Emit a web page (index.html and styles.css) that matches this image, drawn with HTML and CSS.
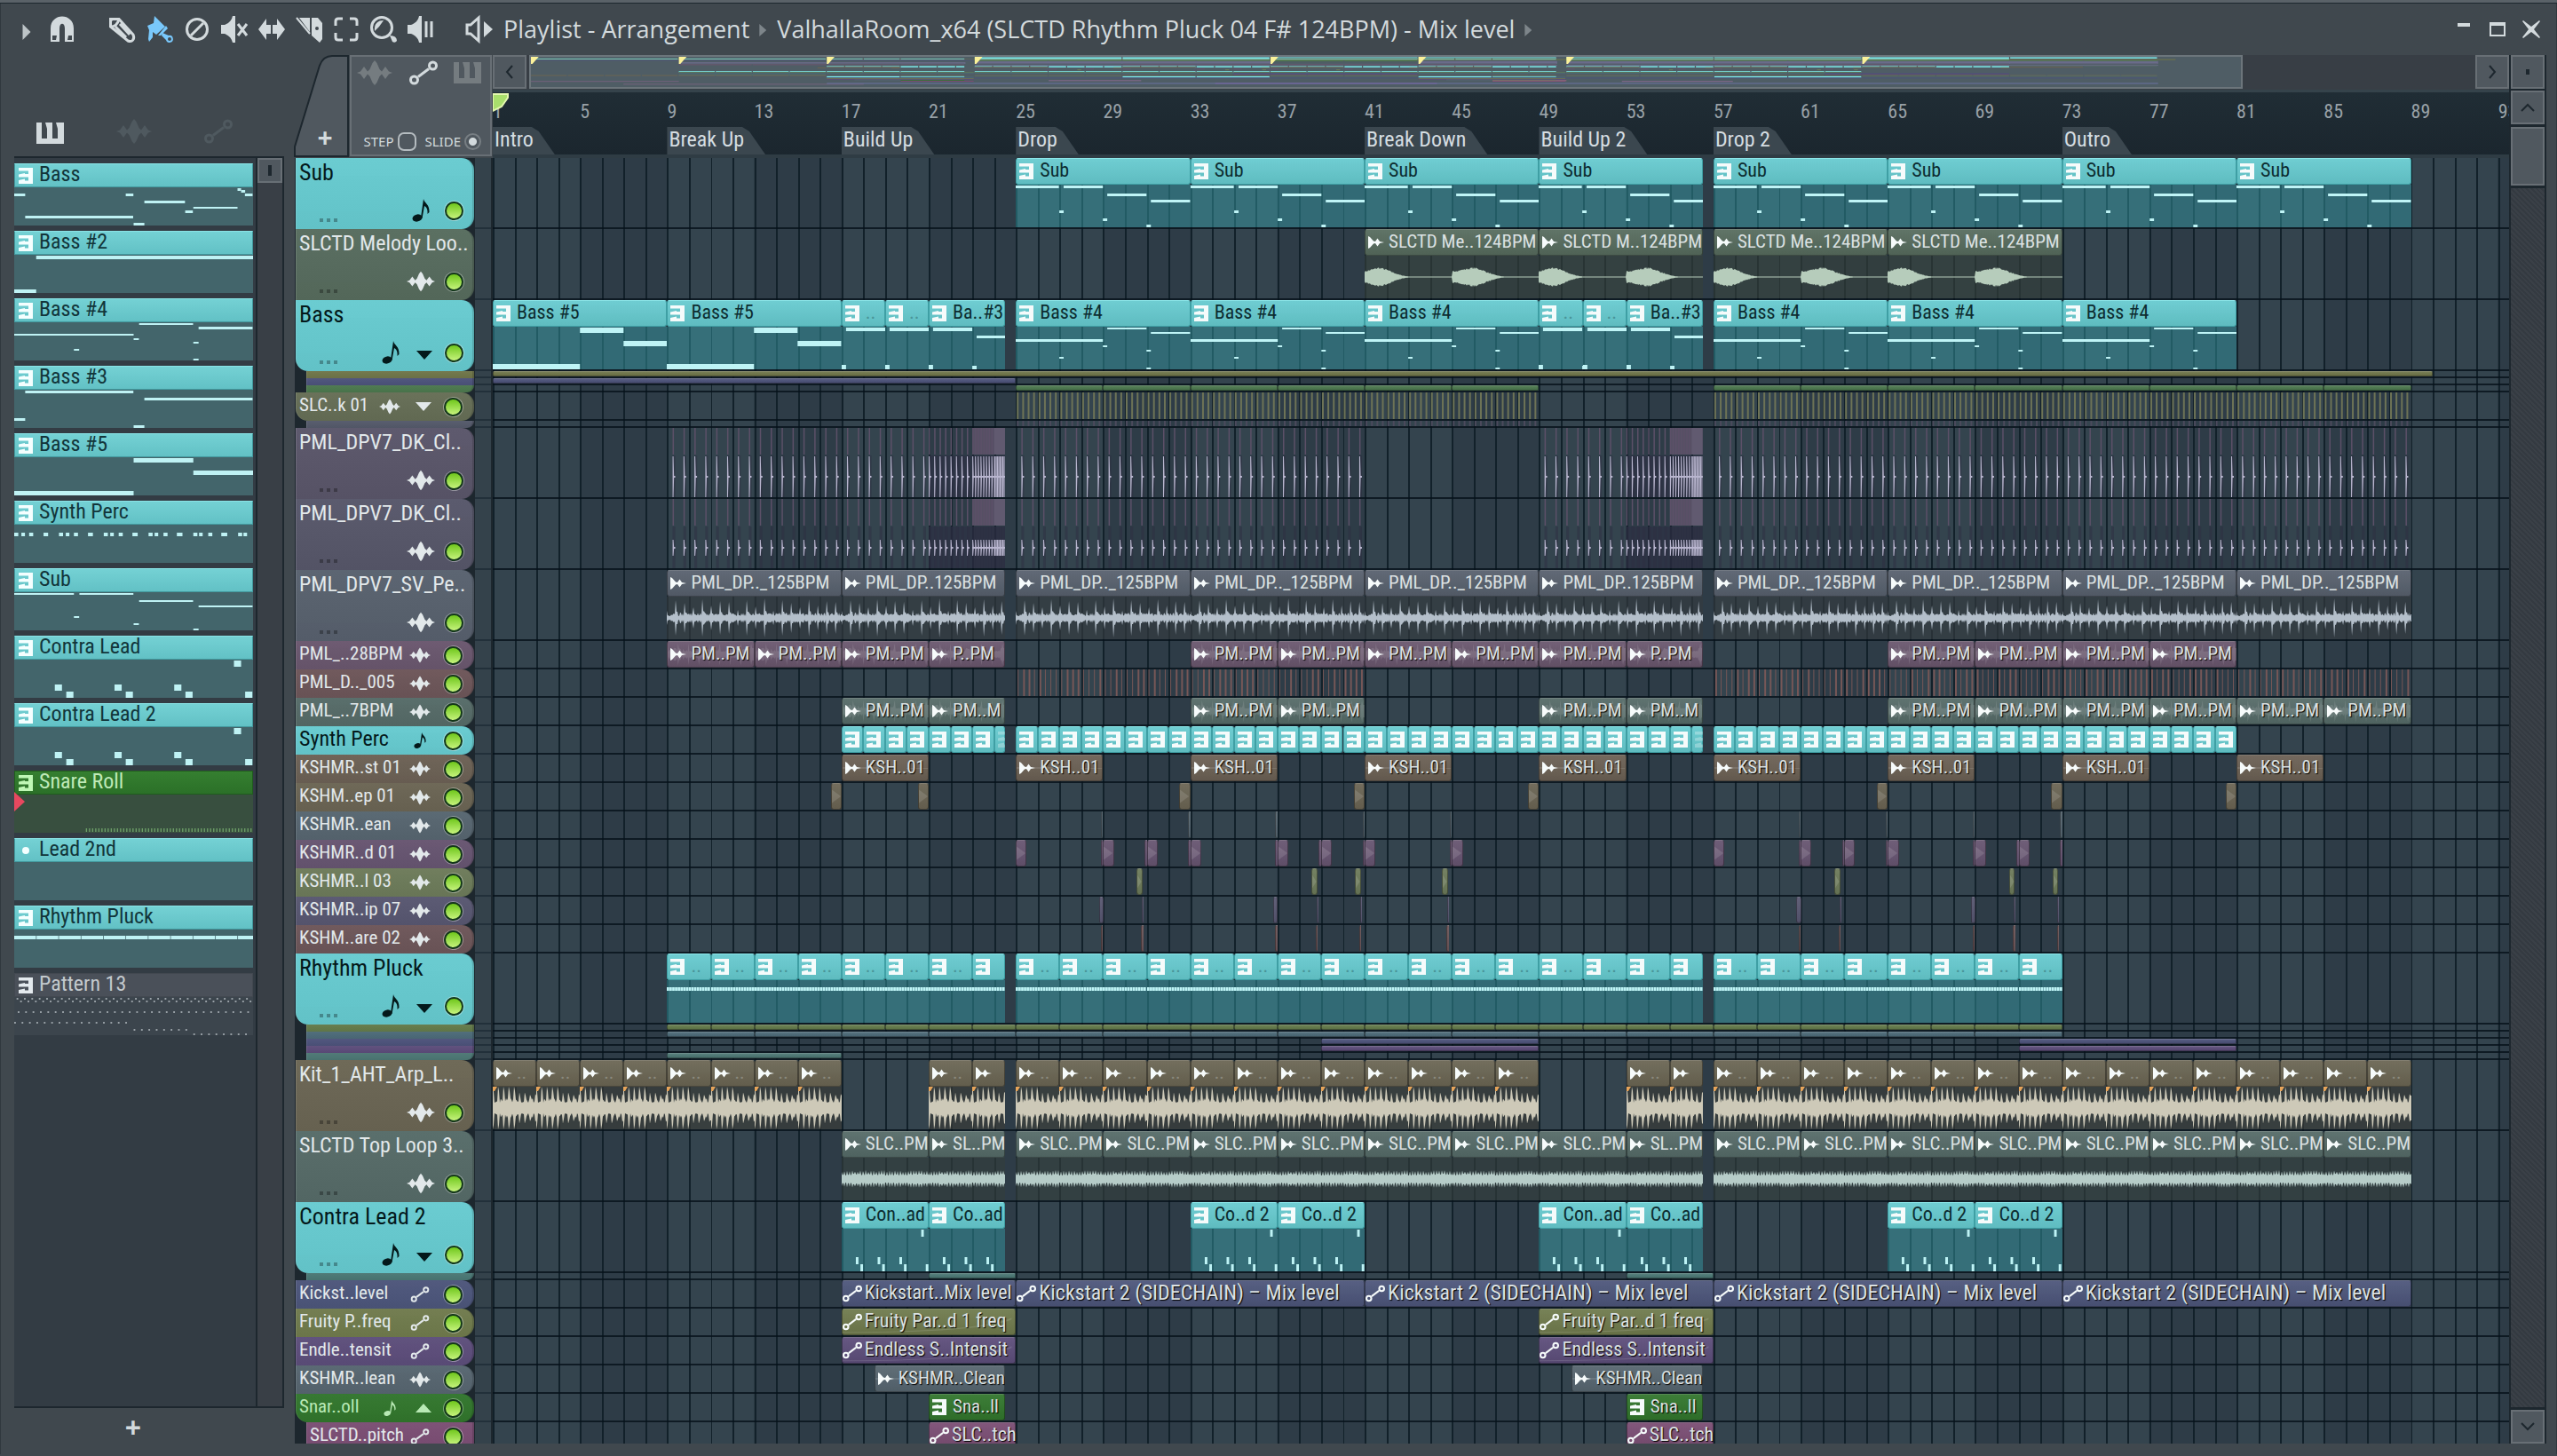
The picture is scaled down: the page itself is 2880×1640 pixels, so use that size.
FILE: index.html
```html
<!DOCTYPE html>
<html lang="en">
<head>
<meta charset="utf-8">
<title>Playlist - Arrangement</title>
<link rel="stylesheet" href="styles.css">
</head>
<body>
<svg class="defs" aria-hidden="true">
  <symbol id="i-piano" viewBox="0 0 31 24"><path d="M0 0H6V18H12V7L10 0H18V18H24V7L22 0H31V24H0Z"/></symbol>
  <symbol id="i-keys" viewBox="0 0 16 18"><path d="M0 0H16V18H0V14L7 12.500V14.500H11V10.500H0V7.500L7 6V7H11V3.500H0Z"/></symbol>
  <symbol id="i-wave" viewBox="0 0 40 28"><path d="M0 14L4 12.500 8 7 12 12.500 14.500 10 17.500 3 20 0 22.500 3 25.500 10 28 12.500 32 7 36 12.500 40 14 36 15.500 32 21 28 15.500 25.500 18 22.500 25 20 28 17.500 25 14.500 18 12 15.500 8 21 4 15.500Z"/></symbol>
  <symbol id="i-auto" viewBox="0 0 32 28"><g fill="none" stroke="currentColor" stroke-width="3"><circle cx="5.500" cy="22" r="4"/><circle cx="26.500" cy="6" r="4"/><path d="M10 18.500L22 9.500"/></g></symbol>
  <symbol id="i-note" viewBox="0 0 20 26"><ellipse cx="6" cy="21.500" rx="5.500" ry="4" transform="rotate(-15 6 21.500)"/><path d="M10 21L13 0C14 5 20 6 19.500 15L17.500 17C18 11 16 9 14 8L11.500 22Z"/></symbol>
  <symbol id="i-clip" viewBox="0 0 18 14"><path d="M0 0L2 1 6 5.500 8 6 10.500 2.500 13 6 18 7 13 8 10.500 11.500 8 8 6 8.500 2 13 0 14Z"/></symbol>
  <symbol id="i-down" viewBox="0 0 18 10"><path d="M0 0H18L9 10Z"/></symbol>
  <symbol id="i-up" viewBox="0 0 18 10"><path d="M0 10H18L9 0Z"/></symbol>
</svg>

<div class="host-bar"></div>
<div class="window">
  <header class="titlebar">
    <button class="tool menu" aria-label="Menu"><svg viewBox="0 0 10 20"><path d="M0 0L10 10 0 20Z" opacity=".85"/></svg></button>
    <button class="tool" aria-label="Snap"><svg viewBox="0 0 30 30"><path d="M0 14C0-4 26-4 26 14V29H16V14C16 7 10 7 10 14V29H0ZM2 22V27H6L7 22ZM20 22L19 27H24V22Z" fill-rule="evenodd"/></svg></button>
    <span class="tool-gap"></span>
    <button class="tool" aria-label="Draw"><svg viewBox="0 0 30 30" class="line"><path d="M1.500 3.500H11L27 21C29 26 26 30 21 28L1.500 12ZM1.500 12Q9 12 11 3.500M7 12L19 24M12 9L23 21"/><path d="M1 3H6L1 8Z" fill="currentColor" stroke="none"/></svg></button>
    <button class="tool active" aria-label="Paint"><svg viewBox="0 0 30 30"><path d="M1 11L8 8 9 0 12 3 21 12 11 21 7 18V24L3 29 2 26 3 16Z"/><path d="M22 11L24 14 16 22 13 22"/><path d="M18 19L25 22A4 4 0 1 1 22 27L17 22ZM26 24A2 2 0 1 0 26 28 2 2 0 0 0 26 24Z" fill-rule="evenodd"/></svg></button>
    <button class="tool" aria-label="Delete"><svg viewBox="0 0 30 30" class="line"><circle cx="15" cy="15" r="11.500"/><path d="M8 22L22 8"/></svg></button>
    <button class="tool" aria-label="Mute"><svg viewBox="0 0 30 30"><path d="M0 10H4C9 8 12 5 13 0H16V30H13C12 25 9 22 4 20H0Z"/><path d="M19 9L29 22M29 9L19 22" class="st"/></svg></button>
    <button class="tool" aria-label="Slip"><svg viewBox="0 0 30 30"><path d="M0 15L9 3V10H14V20H9V27ZM30 15L21 3V10H16V20H21V27Z"/></svg></button>
    <button class="tool" aria-label="Slice"><svg viewBox="0 0 30 30"><path d="M4 2H16V18Z"/><path d="M1 2L16 20" class="st thin"/><path d="M18 2H25L30 8V26L27 30 18 22ZM24 12A2 2 0 1 0 24 16 2 2 0 0 0 24 12Z" fill-rule="evenodd"/></svg></button>
    <button class="tool" aria-label="Select"><svg viewBox="0 0 30 30" class="line"><path d="M3 11V6Q3 3 6 3H11M19 3H24Q27 3 27 6V11M27 19V24Q27 27 24 27H19M11 27H6Q3 27 3 24V19"/></svg></button>
    <button class="tool" aria-label="Zoom"><svg viewBox="0 0 30 30"><circle cx="13" cy="13" r="11.500" class="st"/><path d="M5 17C4 8 9 5 15 5L10 12Z"/><path d="M22 22Q30 22 30 28 28 31 25 29Z"/></svg></button>
    <button class="tool" aria-label="Playback"><svg viewBox="0 0 30 30"><path d="M0 10H4C9 8 12 5 13 0H16V30H13C12 25 9 22 4 20H0Z"/><path d="M21 6V24M27 6V24" class="st"/></svg></button>
    <span class="tool-gap"></span>
    <button class="tool" aria-label="Playlist menu"><svg viewBox="0 0 30 30"><path d="M1 10H5L14 2V28L5 20H1Z" class="st"/><path d="M20 6L30 15 20 24Z"/></svg></button>
    <nav class="crumbs"><a href="#">Playlist - Arrangement</a><i></i><a href="#">ValhallaRoom_x64 (SLCTD Rhythm Pluck 04 F# 124BPM) - Mix level</a><i></i></nav>
    <div class="winbtns">
      <button aria-label="Minimize"><svg viewBox="0 0 20 20"><path d="M3 3H17V7H3Z"/></svg></button>
      <button aria-label="Maximize"><svg viewBox="0 0 20 20"><path d="M1 2H19V18H1ZM3 6V16H17V6Z" fill-rule="evenodd"/></svg></button>
      <button aria-label="Close"><svg viewBox="0 0 20 20"><path d="M1 0L10 7 19 0 20 1 13 10 20 19 19 20 10 13 1 20 0 19 7 10 0 1Z"/></svg></button>
    </div>
  </header>

  <main class="workspace">
    <aside class="picker">
      <div class="picker-tabs">
        <button aria-label="Patterns"><svg class="p"><use href="#i-piano"/></svg></button>
        <button class="dim" aria-label="Audio"><svg class="w"><use href="#i-wave"/></svg></button>
        <button class="dim" aria-label="Automation"><svg class="a"><use href="#i-auto"/></svg></button>
      </div>
      <div class="picker-main">
        <ul class="patterns" id="patterns"></ul>
        <div class="vscroll left"><button aria-label="Scroll patterns"></button></div>
      </div>
      <button class="add-pattern" aria-label="Add pattern">+</button>
    </aside>

    <section class="playlist">
      <div class="head">
        <div class="corner">
          <div class="add-track">
            <svg viewBox="0 0 60 116" preserveAspectRatio="none"><path d="M0 116V105L28 12Q32 1 42 1H60V116Z"/></svg>
            <button aria-label="Add track">+</button>
          </div>
          <div class="modes">
            <div class="mode-icons">
              <button class="dim" aria-label="Show audio"><svg class="w"><use href="#i-wave"/></svg></button>
              <button aria-label="Show automation"><svg class="a"><use href="#i-auto"/></svg></button>
              <button class="dim" aria-label="Show patterns"><svg class="p"><use href="#i-piano"/></svg></button>
            </div>
            <div class="switches">
              <label>STEP<input type="checkbox" class="step"></label>
              <label>SLIDE<input type="checkbox" class="slide" checked></label>
            </div>
          </div>
        </div>
        <div class="timeline">
          <div class="overview">
            <button class="sq" aria-label="Scroll left"><svg viewBox="0 0 10 16"><path d="M8 1L2 8 8 15"/></svg></button>
            <svg class="minimap" id="minimap" viewBox="0 0 9250 38" preserveAspectRatio="none"></svg>
            <span class="rest"></span>
            <button class="sq" aria-label="Scroll right"><svg viewBox="0 0 10 16"><path d="M2 1L8 8 2 15"/></svg></button>
          </div>
          <div class="ruler" id="ruler">
            <svg class="playhead" viewBox="0 0 18 20"><path d="M0 0H17V4L10 14 0 19Z"/></svg>
          </div>
        </div>
        <button class="sq dot" aria-label="Options"></button>
      </div>
      <div class="body">
        <div class="tracks" id="tracks">
          <svg class="grid" id="grid" viewBox="0 0 9250 100" preserveAspectRatio="none"></svg>
        </div>
        <div class="vscroll right">
          <button class="up" aria-label="Scroll up"><svg viewBox="0 0 16 10"><path d="M1 9L8 2 15 9"/></svg></button>
          <div class="thumb"></div>
          <div class="rail"></div>
          <button class="down" aria-label="Scroll down"><svg viewBox="0 0 16 10"><path d="M1 1L8 8 15 1"/></svg></button>
        </div>
      </div>
    </section>
  </main>
</div>
<script src="app.js"></script>
</body>
</html>
```
FILE: styles.css
```css
:root {
  --frame: #40484e;
  --deep: #1d272e;
  --face: #50585f;
  --edge: #686f75;
  --icon: #d3dadd;
  --teal: #68cace;
  --bars: 92.5;
}

* { box-sizing: border-box; }

body {
  margin: 0;
  background: var(--frame);
  color: #dfe5e8;
  font-family: "Roboto Condensed", "Open Sans", sans-serif;
  font-size: 22px;
}

button {
  padding: 0;
  border: 0;
  background: none;
  color: inherit;
  font: inherit;
}

svg { display: block; fill: currentColor; overflow: visible; }
.defs { position: absolute; width: 0; height: 0; }

.host-bar { height: 4px; background: #5a6268; border-bottom: 1px solid var(--deep); }
.window { border-left: 1px solid #30383e; border-right: 1px solid #30383e; }

/* Title bar */
.titlebar {
  display: flex;
  align-items: center;
  height: 58px;
  padding: 0 18px 0 24px;
  color: var(--icon);
}
.tool { width: 30px; height: 30px; margin-right: 12px; }
.tool svg { width: 30px; height: 30px; }
.tool.menu { width: 10px; margin-right: 22px; }
.tool.menu svg { width: 10px; height: 18px; margin-top: 6px; }
.tool.active { color: #79c8fb; }
.tool-gap { width: 24px; }
.line, .st { fill: none; stroke: currentColor; stroke-width: 3; }
.thin { stroke-width: 2; }
.crumbs {
  display: flex;
  align-items: center;
  font: 27px/32px "Open Sans", "Noto Sans", sans-serif;
}
.crumbs a { color: inherit; text-decoration: none; white-space: nowrap; }
.crumbs i {
  width: 8px;
  height: 14px;
  margin: 2px 12px 0 11px;
  background: #7d858a;
  clip-path: polygon(0 0, 100% 50%, 0 100%);
}
.winbtns { display: flex; gap: 18px; margin-left: auto; }
.winbtns svg { width: 20px; height: 20px; }

/* Workspace */
.workspace { display: flex; gap: 12px; padding: 0 11px 12px 15px; }

/* Pattern picker */
.picker { flex: 0 0 304px; display: flex; flex-direction: column; }
.picker-tabs {
  display: flex;
  justify-content: space-between;
  align-items: flex-end;
  height: 114px;
  padding: 0 58px 14px 25px;
  color: var(--icon);
}
.p { width: 31px; height: 24px; }
.w { width: 40px; height: 28px; }
.a { width: 32px; height: 28px; }
.picker .dim { color: #4f595f; }
.picker-main {
  display: flex;
  flex: 1;
  border: solid var(--deep);
  border-width: 2px 2px 2px 0;
  background: #333c44;
}
.patterns {
  flex: 1;
  display: flex;
  flex-direction: column;
  gap: 6px;
  margin: 0;
  padding: 6px 3px 0 0;
  list-style: none;
}
.pattern { height: 70px; color: #12353a; }
.pattern .name {
  display: flex;
  align-items: center;
  gap: 7px;
  height: 27px;
  padding: 0 4px;
  border: 1px solid #439a9f;
  border-top-color: #8ae3e6;
  background: linear-gradient(#74d1d4, #62c1c5);
  font-size: 24px;
  line-height: 22px;
}
.pattern .name span { padding-bottom: 3px; }
.pattern .name svg { width: 16px; height: 18px; color: #f4ffff; }
.pattern .name .bullet { width: 8px; height: 8px; margin: 0 4px; border-radius: 50%; background: #f4ffff; }
.pattern .view { position: relative; height: 43px; background: #43656b; color: #bff2f4; overflow: hidden; }
.pattern .view svg { width: 100%; height: 43px; }
.pattern.green { color: #bfe9b8; position: relative; }
.pattern.green .name { background: linear-gradient(#357f30, #2b7028); border-color: #1f5c1d; }
.pattern.green .name svg { color: #bff7b5; }
.pattern.green .view { background: #384f3f; color: #6d9f68; }
.pattern.green::after {
  content: "";
  position: absolute;
  left: 0;
  top: 24px;
  width: 12px;
  height: 22px;
  background: #e8485f;
  clip-path: polygon(0 0, 100% 50%, 0 100%);
}
.pattern.plain { color: #c3c9cd; }
.pattern.plain .name { background: #4a5059; border-color: #424850; }
.pattern.plain .name svg { color: #e4eaee; }
.pattern.plain .view { background: #3c454d; color: #98a0a6; }
.add-pattern { height: 40px; padding: 4px 36px 0 0; color: var(--icon); font: 700 32px/36px "Open Sans", sans-serif; }

/* Scrollbars */
.vscroll { display: flex; flex-direction: column; background: #393f46; }
.vscroll.left { width: 30px; border-left: 2px solid var(--deep); }
.vscroll.left button {
  height: 28px;
  border: 2px solid var(--edge);
  background: linear-gradient(var(--deep), var(--deep)) center / 4px 12px no-repeat var(--face);
}
.vscroll.right { width: 42px; padding: 0 2px 0 2px; background: var(--deep); margin-top: -76px; gap: 3px; }
.vscroll.right button { flex: none; display: grid; place-items: center; height: 38px; }
.vscroll.right button, .thumb { border: 2px solid var(--edge); background: var(--face); }
.vscroll.right svg { width: 16px; height: 10px; fill: none; stroke: var(--deep); stroke-width: 2; }
.thumb { flex: none; height: 66px; }
.rail { flex: 1; background: repeating-linear-gradient(45deg, #3a4047 0 2px, #343a41 2px 4px); }

/* Playlist header */
.playlist { flex: 1; min-width: 0; }
.head { display: flex; height: 116px; background: var(--deep); }
.corner { flex: 0 0 223px; display: flex; gap: 2px; background: var(--frame); padding-right: 1px; }
.add-track { position: relative; display: flex; align-items: flex-end; justify-content: center; width: 60px; background: var(--frame); }
.add-track svg { position: absolute; inset: 0; width: 60px; height: 114px; fill: var(--face); stroke: var(--deep); stroke-width: 2; }
.add-track button { position: relative; height: 46px; padding-left: 8px; color: var(--icon); font: 700 30px/30px "Open Sans", sans-serif; }
.modes {
  flex: 1;
  height: 114px;
  display: flex;
  flex-direction: column;
  justify-content: space-between;
  border: 2px solid var(--edge);
  background: var(--face);
  color: var(--icon);
}
.mode-icons { display: flex; justify-content: space-between; align-items: center; padding: 4px 10px 0 6px; }
.modes .dim { color: #757c80; }
.switches { display: flex; justify-content: flex-end; gap: 10px; padding: 0 10px 4px 0; font: 15px/22px "Noto Sans", sans-serif; }
.switches label { display: flex; align-items: center; gap: 4px; }
.switches input { appearance: none; margin: 0; width: 21px; height: 21px; border: 2px solid #b4bbbf; }
.step { border-radius: 7px; }
.switches .slide { width: 19px; height: 19px; border-radius: 50%; border-color: #777e83; background: radial-gradient(var(--icon) 4px, transparent 5px); }

.timeline { flex: 1; min-width: 0; }
.overview { display: flex; height: 42px; padding-bottom: 4px; background: #383e45; border-bottom: 3px solid #35434b; }
.sq { flex: 0 0 38px; height: 38px; display: grid; place-items: center; border: 2px solid var(--edge); background: var(--face); }
.sq svg { width: 10px; height: 16px; fill: none; stroke: var(--deep); stroke-width: 2; }
.sq.dot { flex-basis: 38px; margin: 0 2px; background: linear-gradient(var(--deep), var(--deep)) center / 4px 6px no-repeat var(--face); }
.minimap { flex: 1930; min-width: 0; height: 38px; margin-left: 3px; border: 2px solid #6c757b; background: #4f5d65; overflow: hidden; }
.rest { flex: 262; }
.ruler { position: relative; height: 74px; background: linear-gradient(#202d35, #1b262e); border-bottom: 4px solid #2f3c44; overflow: hidden; }
.ruler span { position: absolute; top: 8px; left: calc(var(--at) * 100% / var(--bars)); color: #98a1a7; line-height: 28px; }
.ruler b {
  position: absolute;
  bottom: 0;
  left: calc(var(--at) * 100% / var(--bars));
  height: 31px;
  padding: 0 24px 0 2px;
  background: #3b474f;
  color: #d5dde1;
  font-size: 24px;
  font-weight: 400;
  line-height: 28px;
  white-space: nowrap;
  clip-path: polygon(0 0, calc(100% - 26px) 0, calc(100% - 18px) 5px, 100% 100%, 0 100%);
}
.playhead { position: absolute; left: 0; top: 2px; width: 18px; height: 20px; fill: #a9df6c; stroke: #e4f7b0; stroke-width: 2; z-index: 1; }

/* Tracks */
.body { display: flex; }
.tracks { position: relative; flex: 1; min-width: 0; background: var(--deep); }
.grid { position: absolute; top: 0; left: 223px; width: calc(100% - 223px); height: 100%; overflow: hidden; }
.track { display: flex; height: 32px; padding-left: 1px; }
.track.tall { height: 80px; }
.track.strip { height: 8px; }
.track.last { height: 24px; align-items: flex-start; overflow: hidden; }
.last .th, .last .lane, .last .gutter { height: 32px; }
.th {
  flex: 0 0 201px;
  min-width: 0;
  display: flex;
  align-items: center;
  padding: 0 11px 0 3px;
  border-left: 1px solid rgba(255, 255, 255, .12);
  border-right: 2px solid rgba(0, 0, 0, .15);
  border-radius: 0 14px 14px 0;
  background: linear-gradient(rgba(255, 255, 255, .03), rgba(0, 0, 0, .04)) var(--c);
  color: #e2e8ea;
}
.th .name { flex: 1; white-space: nowrap; font-size: 21px; line-height: 28px; margin-top: -4px; }
.th svg { flex: none; width: 24px; height: 18px; margin: 0 4px; }
.th .n { width: 14px; height: 20px; margin: 0 9px; }
.th .arrow { width: 18px; height: 10px; margin: 0 3px 0 13px; }
.tall .th { display: grid; grid-template-columns: 1fr auto auto auto; align-content: space-between; padding-top: 1px; padding-bottom: 8px; }
.tall .name { grid-column: 1 / -1; width: 185px; font-size: 24px; line-height: 30px; margin-top: 0; }
.tall .th .led { grid-column: 4; }
.tall .th .w { width: 32px; height: 24px; margin: 0; }
.tall .th .n { width: 20px; height: 26px; margin: 0 6px; }
.tall .th .arrow { margin-top: 6px; }
.dots { width: 20px; height: 4px; margin: 22px 0 0 23px; background: repeating-linear-gradient(90deg, rgba(0, 0, 0, .3) 0 4px, transparent 4px 8px); }
.led {
  appearance: none;
  flex: 0 0 21px;
  width: 21px;
  height: 21px;
  margin: 0 0 0 11px;
  border: 2px solid #14381a;
  border-radius: 50%;
  background: linear-gradient(#6fc71c, #c6f37c);
  box-shadow: 0 0 0 1px rgba(255, 255, 255, .35);
}
.teal .th { color: #04191b; }
.teal .th .name { font-size: 24px; }
.teal.tall .th .name { font-size: 26px; }
.green .th { color: #b9e9b5; }
.parent .th { border-bottom-left-radius: 14px; }
.strip .th { flex-basis: 189px; margin-left: 12px; border-radius: 0; }
.strip.end .th { border-bottom-right-radius: 8px; }
.child .th { flex-basis: 189px; margin-left: 12px; border-radius: 0; }
.gutter { flex: 0 0 18px; margin: 0 2px 0 1px; border-bottom: 2px solid #22303a; background: #34424b; }
.lane { position: relative; flex: 1; border-bottom: 2px solid rgba(6, 18, 26, .8); overflow: hidden; }
.lane > svg { position: absolute; inset: 0; width: 100%; height: 100%; }

/* Clips */
.clip {
  position: absolute;
  top: 0;
  bottom: 0;
  left: calc(var(--at) * 100% / var(--bars));
  width: calc(var(--len) * 100% / var(--bars));
  overflow: hidden;
}
.clip .bar {
  position: relative;
  display: flex;
  align-items: center;
  gap: 5px;
  height: 30px;
  padding: 0 0 0 3px;
  border: 1px solid rgba(0, 0, 0, .35);
  border-top-color: rgba(255, 255, 255, .2);
  border-radius: 3px;
  background: linear-gradient(rgba(255, 255, 255, .06), rgba(0, 0, 0, .07)) var(--c);
  color: #dbe1e2;
  font-size: 21px;
  line-height: 26px;
  white-space: nowrap;
}
.clip .bar span { position: relative; margin-top: -2px; }
.clip .bar svg { flex: 0 0 18px; width: 18px; height: 14px; color: #f6fbfb; }
.clip .bar .k { flex-basis: 16px; width: 16px; height: 18px; margin-right: 2px; }
.clip .bar .au { flex-basis: 22px; width: 22px; height: 22px; margin: 0 -2px 0 -3px; }
.clip .bar .bg { position: absolute; inset: 0; width: 100%; height: 100%; color: rgba(255, 255, 255, .12); }
.teal .clip .bar { color: #0d2c30; border-color: #3f9fa4; border-top-color: #8ce6e9; font-size: 22px; }
.small .clip .bar { text-shadow: 1px 1px 1px #000; }
.small.teal .clip .bar { text-shadow: none; }
.auto .clip .bar { font-size: 22px; }
.auto .clip.long .bar { font-size: 24px; }
.strip .clip .bar { height: 6px; border-radius: 2px; }
.clip .faint { opacity: .3; }
.clip .view { position: relative; height: 48px; background: color-mix(in srgb, var(--c) 22%, rgba(34, 40, 40, .55)); color: var(--w); }
.teal .clip .view { background: rgba(57, 172, 180, .42); color: #bff4f6; }
.clip .view svg { width: 100%; height: 48px; overflow: hidden; }
```
FILE: app.js
```js
var BAR = 24.54, TEAL = '#66cacf';

function rnd(seed) {
  return function () { seed = (seed * 16807) % 2147483647; return seed / 2147483647; };
}
function rect(x, y, w, h, fill) {
  return '<rect x="' + x.toFixed(2) + '" y="' + y + '" width="' + w.toFixed(2) + '" height="' + h + '"' + (fill ? ' fill="' + fill + '"' : '') + '/>';
}
function use(id, cls) { return '<svg class="' + (cls || '') + '"><use href="#i-' + id + '"/></svg>'; }

/* A mirrored outline from a list of half-heights, one per pixel column. */
function outline(hs, mid) {
  var up = '', down = '';
  hs.push(hs[hs.length - 1]);
  hs.forEach(function (h, i) {
    up += 'L' + i + ' ' + (mid - h).toFixed(1);
    down = 'L' + i + ' ' + (mid + h).toFixed(1) + down;
  });
  return '<path d="M0 ' + mid + up + down + 'Z"/>';
}

var shapes = {
  melody: function (len) {
    var hs = [], r = rnd(7);
    for (var x = 0; x < len * BAR; x++) {
      var t = (x / BAR) % 4, second = (x / BAR) % 8 >= 4, peak = second ? 0.95 : 0.6;
      var h = t < peak ? 6 + 4 * t / peak : 10 * Math.exp(-Math.pow((t - peak) / 0.85, 2));
      hs.push(Math.max(0.6, h * (0.88 + 0.24 * r())));
    }
    return outline(hs, 24);
  },
  perc: function (len) {
    var hs = [], r = rnd(31), spikes = [8, 20, 17, 12, 21, 14, 19, 18, 9, 20, 13, 22];
    for (var x = 0; x < len * BAR; x++) {
      var k = Math.floor(x / 10), p = x % 10;
      hs.push(p < 1 ? spikes[k % 12] : p < 3 ? spikes[k % 12] * 0.35 : 2 + 4 * r());
    }
    return outline(hs, 24);
  },
  arp: function (len) {
    var hs = [], r = rnd(77);
    for (var x = 0; x < len * BAR; x++) {
      var q = (x % (2 * BAR)) / (2 * BAR), p = x % 6;
      var top = q < 0.55 ? 24 : 15 + 4 * r();
      hs.push(p < 1 ? top : p < 2 ? top * 0.8 : 6 + 5 * r());
    }
    return outline(hs, 24);
  },
  top: function (len) {
    var hs = [], r = rnd(55);
    for (var x = 0; x < len * BAR; x++) hs.push(x % 3 < 1 ? 8 + 2 * r() : 4 + 2 * r());
    return outline(hs, 24);
  },
  faint: function (len) {
    var hs = [], r = rnd(19);
    for (var x = 0; x < len * BAR; x++) hs.push(x % 12 < 1 ? 13 : 3 + 5 * r() * (x % 40 < 20 ? 1 : .5));
    return outline(hs, 15);
  },
  line: function (len) { return rect(len * BAR * .75, 15, len * BAR * .25, 1) + rect(0, 14, len * BAR * .5, 2); },
  hit: function (len) { return '<path d="M0 7L' + len * BAR + ' 15 0 23Z"/>'; },
  curve: function (len) { return '<path d="M0 27Q' + len * BAR * .8 + ' 27 ' + (len * BAR - 4) + ' 10V12Q' + len * BAR * .8 + ' 28 0 28Z"/>'; }
};

/* Piano-roll previews: start bar, length in bars, y, height. */
var sub = [[0, 1.98, 1, 3], [2, .2, 29, 3], [2.2, 1.8, 1, 3], [4, .2, 38, 3], [4.2, 1.8, 10, 3], [6, .2, 45, 3], [6.2, 1.8, 17, 3]];
var bass4 = [[0, 4, 14, 3], [2, .2, 34, 2], [4, .2, 21, 2], [4.2, 1.8, 1, 2], [6, .2, 26, 2], [6.2, 1.8, 6, 2], [6, .2, 46, 2]];
var bass5 = [[0, 4, 42, 6], [4, 2, 1, 6], [6, 2, 16, 6]];
var bass3 = [[0, .2, 43, 5], [.2, 1.8, 1, 4], [2, .2, 44, 4], [2.2, 1.8, 10, 3]];
var contra = [];
[0, 1, 2, 3].forEach(function (b) { contra.push([b + .65, .12, b === 3 ? 1 : 32, 8], [b + .86, .12, 40, 8]); });
var pluck = [];
for (var i = 0; i < 16; i++) pluck.push([i / 8, .11, 8, 4]);
var rollSets = { sub: sub, b4: bass4, b5: bass5, b3: bass3, contra: contra, pluck: pluck };

/* Clip: [start bar, length, label, preview]. */
function run(from, to, step, label, view) {
  var out = [];
  for (var b = from; b < to; b += step) out.push([b, Math.min(step, to - b), label, view]);
  return out;
}
function each(starts, len, label, view) { return starts.map(function (s) { return [s, len, label, view]; }); }

var kick = 'Kickstart 2 (SIDECHAIN) – Mix level';
var tracks = [
  { name: 'Sub', c: TEAL, k: 'tall teal', icon: 'note', clips: each([25, 33, 41], 8, 'Sub', 'sub').concat([[49, 7.5, 'Sub', 'sub']], each([57, 65, 73, 81], 8, 'Sub', 'sub')) },
  { name: 'SLCTD Melody Loo..', c: '#566b5d', w: '#b6ccbb', k: 'tall', icon: 'wave', clips: [[41, 8, 'SLCTD Me..124BPM', 'melody'], [49, 7.5, 'SLCTD M..124BPM', 'melody'], [57, 8, 'SLCTD Me..124BPM', 'melody'], [65, 8, 'SLCTD Me..124BPM', 'melody']] },
  { name: 'Bass', c: TEAL, k: 'tall teal parent', icon: 'note', arrow: 'down', clips: each([1, 9], 8, 'Bass #5', 'b5').concat([[17, 2, '..', 'b3'], [19, 2, '..', 'b3'], [21, 3.5, 'Ba..#3', 'b3']], each([25, 33, 41], 8, 'Bass #4', 'b4'), [[49, 2, '..', 'b3'], [51, 2, '..', 'b3'], [53, 3.5, 'Ba..#3', 'b3']], each([57, 65, 73], 8, 'Bass #4', 'b4')) },
  { c: '#6f7549', k: 'strip', clips: [[1, 89]] },
  { c: '#4c527a', k: 'strip', clips: [[1, 24]] },
  { c: '#4b774d', k: 'strip end', clips: run(25, 49, 4).concat(run(57, 89, 4)) },
  { name: 'SLC..k 01', c: '#656d55', k: 'small parent', icon: 'wave', arrow: 'down', hits: 'shaker' },
  { c: '#54596a', k: 'strip end', hits: 'specks' },
  { name: 'PML_DPV7_DK_Cl..', c: '#595569', k: 'tall', icon: 'wave', hits: 'clap', size: 23 },
  { name: 'PML_DPV7_DK_Cl..', c: '#565669', k: 'tall', icon: 'wave', hits: 'clap', size: 9 },
  { name: 'PML_DPV7_SV_Pe..', c: '#57606d', w: '#b4bfca', k: 'tall', icon: 'wave', clips: [[9, 8], [17, 7.5], [25, 8], [33, 8], [41, 8], [49, 7.5], [57, 8], [65, 8], [73, 8], [81, 8]].map(function (p) { return [p[0], p[1], p[1] === 8 ? 'PML_DP.._125BPM' : 'PML_DP..125BPM', 'perc']; }) },
  { name: 'PML_..28BPM', c: '#69566d', k: 'small', icon: 'wave', clips: each([9, 13, 17], 4, 'PM..PM', 'faint').concat([[21, 3.5, 'P..PM', 'faint']], each([33, 37, 41, 45, 49], 4, 'PM..PM', 'faint'), [[53, 3.5, 'P..PM', 'faint']], each([65, 69, 73, 77], 4, 'PM..PM', 'faint')) },
  { name: 'PML_D.._005', c: '#6c5558', k: 'small', icon: 'wave', hits: 'perc2' },
  { name: 'PML_..7BPM', c: '#556a67', k: 'small', icon: 'wave', clips: [[17, 4, 'PM..PM', 'faint'], [21, 3.5, 'PM..M', 'faint'], [33, 4, 'PM..PM', 'faint'], [37, 4, 'PM..PM', 'faint'], [49, 4, 'PM..PM', 'faint'], [53, 3.5, 'PM..M', 'faint']].concat(each([65, 69, 73, 77, 81, 85], 4, 'PM..PM', 'faint')) },
  { name: 'Synth Perc', c: TEAL, k: 'small teal', icon: 'note', clips: run(17, 24.5, 1, '').concat(run(25, 56.5, 1, ''), run(57, 81, 1, '')) },
  { name: 'KSHMR..st 01', c: '#6b6054', k: 'small', icon: 'wave', clips: each([17, 25, 33, 41, 49, 57, 65, 73, 81], 4, 'KSH..01', 'line') },
  { name: 'KSHM..ep 01', c: '#6a6453', k: 'small', icon: 'wave', clips: each([16.5, 20.5, 32.5, 40.5, 48.5, 64.5, 72.5, 80.5], .5, null, 'hit') },
  { name: 'KSHMR..ean', c: '#56656f', k: 'small', icon: 'wave', clips: each([28.9, 32.9, 36.9, 40.9, 44.9, 60.9, 64.9, 68.9, 72.9], .1) },
  { name: 'KSHMR..d 01', c: '#665470', k: 'small', icon: 'wave', clips: each([28.9, 30.9, 32.9, 36.9, 38.9, 40.9, 44.9, 60.9, 62.9, 64.9, 68.9, 70.9, 72.9], .1).concat(each([25, 29, 31, 33, 37, 39, 41, 45, 57, 61, 63, 65, 69, 71], .5, null, 'hit')) },
  { name: 'KSHMR..l 03', c: '#6c7a59', k: 'small', icon: 'wave', clips: each([30.55, 38.55, 40.55, 44.55, 62.55, 70.55, 72.55], .27, null, 'hit') },
  { name: 'KSHMR..ip 07', c: '#575670', k: 'small', icon: 'wave', clips: each([28.8, 36.8, 60.8, 68.8], .22).concat(each([30.78, 38.78, 40.78, 44.78, 62.78, 70.78, 72.78], .08)) },
  { name: 'KSHM..are 02', c: '#6c5558', k: 'small', icon: 'wave', clips: each([28.9, 30.75, 36.9, 38.75, 40.75, 44.75, 60.9, 62.75, 68.9, 70.75, 72.75], .1) },
  { name: 'Rhythm Pluck', c: TEAL, k: 'tall teal parent', icon: 'note', arrow: 'down', clips: run(9, 24.5, 2, '..', 'pluck').concat(run(25, 56.5, 2, '..', 'pluck'), run(57, 73, 2, '..', 'pluck')) },
  { c: '#637a4a', k: 'strip', clips: run(9, 73, 2) },
  { c: '#4c6a78', k: 'strip', clips: run(9, 73, 4) },
  { c: '#4c527a', k: 'strip', clips: [[39, 10], [71, 10]] },
  { c: '#5c4c7a', k: 'strip', clips: [[39, 10], [71, 10]] },
  { c: '#4c7774', k: 'strip end', clips: [[9, 8]] },
  { name: 'Kit_1_AHT_Arp_L..', c: '#6a6553', w: '#cdc9b8', k: 'tall', icon: 'wave', clips: run(1, 17, 2, '..', 'arp').concat(run(21, 24.5, 2, '..', 'arp'), run(25, 49, 2, '..', 'arp'), run(53, 56.5, 2, '..', 'arp'), run(57, 89, 2, '..', 'arp')) },
  { name: 'SLCTD Top Loop 3..', c: '#556a67', w: '#b6ccc8', k: 'tall', icon: 'wave', clips: [[17, 4, 'SLC..PM', 'top'], [21, 3.5, 'SL..PM', 'top']].concat(run(25, 53, 4, 'SLC..PM', 'top'), [[53, 3.5, 'SL..PM', 'top']], run(57, 89, 4, 'SLC..PM', 'top')) },
  { name: 'Contra Lead 2', c: TEAL, k: 'tall teal parent', icon: 'note', arrow: 'down', clips: [[17, 4, 'Con..ad', 'contra'], [21, 3.5, 'Co..ad', 'contra'], [33, 4, 'Co..d 2', 'contra'], [37, 4, 'Co..d 2', 'contra'], [49, 4, 'Con..ad', 'contra'], [53, 3.5, 'Co..ad', 'contra'], [65, 4, 'Co..d 2', 'contra'], [69, 4, 'Co..d 2', 'contra']] },
  { c: '#4a7774', k: 'strip end', clips: [[21, 4], [53, 4]] },
  { name: 'Kickst..level', c: '#4c557a', k: 'small auto', icon: 'auto', clips: [[17, 8, 'Kickstart..Mix level']].concat(each([25, 41, 57, 73], 16, kick)) },
  { name: 'Fruity P..freq', c: '#6f7a4c', k: 'small auto', icon: 'auto', clips: each([17, 49], 8, 'Fruity Par..d 1 freq', 'curve') },
  { name: 'Endle..tensit', c: '#5c4d7a', k: 'small auto', icon: 'auto', clips: each([17, 49], 8, 'Endless S..Intensit', 'curve') },
  { name: 'KSHMR..lean', c: '#56656f', k: 'small', icon: 'wave', clips: each([18.5, 50.5], 6, 'KSHMR..Clean', 'line') },
  { name: 'Snar..oll', c: '#31752c', k: 'small green parent', icon: 'note', arrow: 'up', clips: each([21, 53], 3.5, 'Sna..ll') },
  { name: 'SLCTD..pitch', c: '#7a4d73', k: 'small auto child last', icon: 'auto', clips: each([21, 53], 4, 'SLC..tch', 'curve') }
];

/* One-shot tracks are drawn as a single picture over the whole lane. */
function span(from, to, step, fn) { for (var t = from; t < to - 1e-6; t += step) fn((t - 1) * BAR); }
function drawHits(t) {
  var s = '', h = t.size;
  function clap(x) {
    s += rect(x, 0, 1.5, 30, '#5c5068') + rect(x, 31, 3, 47, 'rgba(45,45,66,.5)') + '<path fill="#b9b6cf" d="M' + x + ' ' + (55 - h) + 'h1L' + (x + 1.6) + ' 54h1.4v2h-1.4L' + (x + 1) + ' ' + (55 + h) + 'h-1z"/>';
  }
  if (t.hits === 'clap') {
    [[9, 24.5], [49, 56.5]].forEach(function (p) {
      var end = (p[1] - 1) * BAR;
      s += rect(end - 1.5 * BAR, 0, 1.5 * BAR, 30, '#565064') + rect(end - 3.5 * BAR, 31, 3.5 * BAR, 47, 'rgba(44,42,66,.45)');
      span(p[0] + .25, p[1] - 3.75, .5, clap);
      span(p[1] - 3.75, p[1] - 1.5, .25, clap);
      span(p[1] - 1.5, p[1], .125, clap);
      s += rect(end - .5 * BAR, 0, .5 * BAR, 30, '#615a70') + rect(end - .5 * BAR, 55 - h, .5 * BAR, h * 2, 'rgba(185,182,207,.6)') + rect(end - 1.5 * BAR, 54, 1.5 * BAR, 2, '#b9b6cf');
    });
    span(25.25, 41, .5, clap);
    span(57.25, 89, .5, clap);
    return s;
  }
  var r = rnd(5);
  function tick(x) {
    if (t.hits === 'shaker') s += rect(x + 1, 0, 2, 30, '#6d7356');
    if (t.hits === 'specks') s += rect(x + 1, 0, 2, 6, '#4b4a5c');
    if (t.hits === 'perc2') s += rect(x + 2, 0, r() > .5 ? 2 : 1, 30, '#765757');
  }
  if (t.hits === 'perc2') span(25, 41, .25, tick); else span(25, 49, .25, tick);
  span(57, 89, .25, tick);
  return s;
}

function pic(cls, w, h, body) {
  return '<svg class="' + cls + '" viewBox="0 0 ' + w.toFixed(1) + ' ' + h + '" preserveAspectRatio="none">' + body + '</svg>';
}
function clipHTML(t, c) {
  var len = c[1], label = c[2], view = c[3], bar = '', body = '';
  var tall = t.k.indexOf('tall') >= 0, teal = t.k.indexOf('teal') >= 0, keys = teal || t.k.indexOf('green') >= 0;
  if (view && !tall) bar += pic('bg', len * BAR, 30, shapes[view](len));
  if (label !== undefined && label !== null) {
    bar += t.icon === 'auto' ? use('auto', 'au') : keys ? use('keys', 'k' + (len < 1 ? ' faint' : '')) : use('clip');
    if (label && !(label === '..' && len < 2)) bar += '<span' + (label === '..' ? ' class="faint"' : '') + '>' + label + '</span>';
  }
  if (view && tall) {
    var set = rollSets[view];
    body = '<div class="view">' + pic('', len * BAR, 48, set ? set.map(function (n) { return rect(n[0] * BAR, n[2], n[1] * BAR, n[3]); }).join('') : shapes[view](len) + (view === 'arp' ? '<path fill="#e8a55a" d="M0 0H5L2 5H0Z"/>' : '')) + '</div>';
  }
  return '<div class="clip' + (len >= 16 ? ' long' : '') + '" style="--at:' + (c[0] - 1) + ';--len:' + len + '"><div class="bar">' + bar + '</div>' + body + '</div>';
}

var html = '';
tracks.forEach(function (t) {
  var th = '';
  if (t.name) {
    th += '<span class="name">' + t.name + '</span>';
    if (t.k.indexOf('tall') >= 0) th += '<span class="dots"></span>';
    th += use(t.icon, t.icon === 'note' ? 'n' : t.icon === 'wave' ? 'w' : '');
    if (t.arrow) th += use(t.arrow, 'arrow');
    th += '<input type="checkbox" class="led" checked aria-label="Enable ' + t.name + '">';
  }
  html += '<div class="track ' + t.k + '" style="--c:' + t.c + ';--w:' + (t.w || '#d8dedf') + '"><div class="th">' + th + '</div><div class="gutter"></div><div class="lane">' +
    (t.hits ? pic('', 92.5 * BAR, t.k.indexOf('tall') >= 0 ? 78 : t.k.indexOf('strip') >= 0 ? 6 : 30, drawHits(t)) : '') +
    (t.clips || []).map(function (c) { return clipHTML(t, c); }).join('') + '</div></div>';
});
document.getElementById('tracks').insertAdjacentHTML('beforeend', html);

/* Bar lines, shaded in groups of four. */
var g = '';
for (i = 0; i < 93; i += 4) g += '<rect x="' + i * 100 + '" y="0" width="400" height="100" fill="' + (i % 8 ? '#2e3c47' : '#34444e') + '"/>';
for (i = 0; i < 93; i++) g += '<rect x="' + i * 100 + '" y="0" width="8" height="100" fill="#12212a" shape-rendering="crispEdges"/>';
document.getElementById('grid').innerHTML = g;

/* Ruler numbers and section markers. */
var ruler = '';
for (i = 1; i <= 93; i += 4) ruler += '<span style="--at:' + (i - 1) + '">' + i + '</span>';
[[1, 'Intro'], [9, 'Break Up'], [17, 'Build Up'], [25, 'Drop'], [41, 'Break Down'], [49, 'Build Up 2'], [57, 'Drop 2'], [73, 'Outro']].forEach(function (m) {
  ruler += '<b style="--at:' + (m[0] - 1) + '">' + m[1] + '</b>';
});
document.getElementById('ruler').insertAdjacentHTML('beforeend', ruler);

/* Overview map. */
var mm = '';
tracks.forEach(function (t, n) {
  var y = (n * .8 + .5).toFixed(1), c = t.c === TEAL ? '#7ff0f2' : t.c;
  (t.clips || []).forEach(function (k) {
    mm += '<rect x="' + (k[0] - 1) * 100 + '" y="' + y + '" width="' + (k[1] * 100 - 6) + '" height="' + (t.c === TEAL ? 1.6 : 1.2) + '" fill="' + c + '"/>';
  });
  if (t.hits) [[9, 24.5], [25, 41], [49, 56.5], [57, 89]].forEach(function (s) {
    if (s[0] % 16 === 9 && t.hits !== 'clap' && s[0] < 57 && s[0] !== 25) return;
    mm += '<rect x="' + (s[0] - 1) * 100 + '" y="' + y + '" width="' + (s[1] - s[0]) * 100 + '" height="1" fill="#77729a" opacity=".7"/>';
  });
});
[[1, 8, 30.5, '#77637e'], [6, 13, 34, '#77637e'], [17, 72, 33, '#6e74a8'], [29, 5, 29.5, '#8e6b94'], [38, 12, 33, '#7a68a8'], [53, 4, 29.5, '#a06b84'], [60, 6, 30.5, '#8e6b94']].forEach(function (b) {
  mm += '<rect x="' + (b[0] - 1) * 100 + '" y="' + b[2] + '" width="' + b[1] * 100 + '" height="1" fill="' + b[3] + '"/>';
});
[1, 9, 17, 25, 41, 49, 57, 73].forEach(function (b) {
  var x = (b - 1) * 100;
  mm += '<path fill="#fbf29a" d="M' + x + ' 0h42L' + (x + 8) + ' 9h-8z"/>';
});
document.getElementById('minimap').innerHTML = mm;

/* Pattern picker. Notes: x %, width %, y, height. */
function dots(from, to, step, y, w, h) { var o = []; for (var x = from; x < to; x += step) o.push([x, w, y, h]); return o; }
var lead = [[17, 3, 28, 7], [21.8, 3, 36, 7], [42, 3, 28, 7], [46.7, 3, 36, 7], [67, 3, 28, 7], [71.7, 3, 36, 7], [92, 3, 1, 7], [96.7, 3, 36, 7]];
var patterns = [
  ['Bass', '', [[0, 4.6, 7, 3], [46.7, 3.2, 7, 3], [54.5, 17, 15, 3], [75, 18.5, 22, 2], [71.6, 3.2, 26, 3], [4.6, 45.2, 32, 3], [50, 4.5, 40, 3], [93.5, 1.5, 1, 3], [95, 1.7, 3, 3], [96.6, 3.2, 7, 3]]],
  ['Bass #2', '', [[9.2, 90.8, 1, 4], [0, 9.2, 39, 4]]],
  ['Bass #4', '', [[0, 50, 13, 2], [52.3, 22.6, 1, 2], [77.2, 22.6, 5, 3], [25, 2.2, 30, 2], [50, 2.2, 18, 2], [75, 2.2, 22, 2], [75, 2.2, 41, 2]]],
  ['Bass #3', '', [[4.6, 45.3, 1, 3], [54.5, 45.3, 9, 3], [0, 4.6, 32, 3], [50, 4.5, 40, 3]]],
  ['Bass #5', '', [[50, 25, 1, 5], [75, 25, 15, 5], [0, 50, 38, 5]]],
  ['Synth Perc', '', dots(0, 98, 6.25, 9, 1.7, 4).concat(dots(3, 98, 9.3, 9, 1.5, 4))],
  ['Sub', '', [[0, 25, 1, 2], [27.3, 22.6, 1, 2], [52.3, 22.6, 9, 2], [77.2, 22.6, 15, 2], [25, 2.2, 27, 2], [50, 2.2, 35, 2], [75, 2.2, 41, 2]]],
  ['Contra Lead', '', lead],
  ['Contra Lead 2', '', lead],
  ['Snare Roll', 'green', dots(30, 99, 1.3, 38, .5, 4)],
  ['Lead 2nd', '', []],
  ['Rhythm Pluck', '', dots(0, 100, 9.37, 7, 9.1, 4)],
  ['Pattern 13', 'plain', dots(1, 99, 3.1, 1, .7, 2).concat(dots(2.5, 99, 3.1, 4, .7, 2), dots(1.5, 99, 3.1, 16, .7, 2), dots(0, 48, 3.1, 28, .7, 2), dots(50, 74, 3.1, 36, .7, 2), dots(75, 99, 3.1, 41, .7, 2))]
];
document.getElementById('patterns').innerHTML = patterns.map(function (p) {
  return '<li class="pattern ' + p[1] + '"><div class="name">' + (p[0] === 'Lead 2nd' ? '<i class="bullet"></i>' : use('keys')) + '<span>' + p[0] + '</span></div><div class="view">' +
    pic('', 100, 43, p[2].map(function (n) { return rect(n[0], n[2], n[1], n[3]); }).join('')) + '</div></li>';
}).join('');
```
